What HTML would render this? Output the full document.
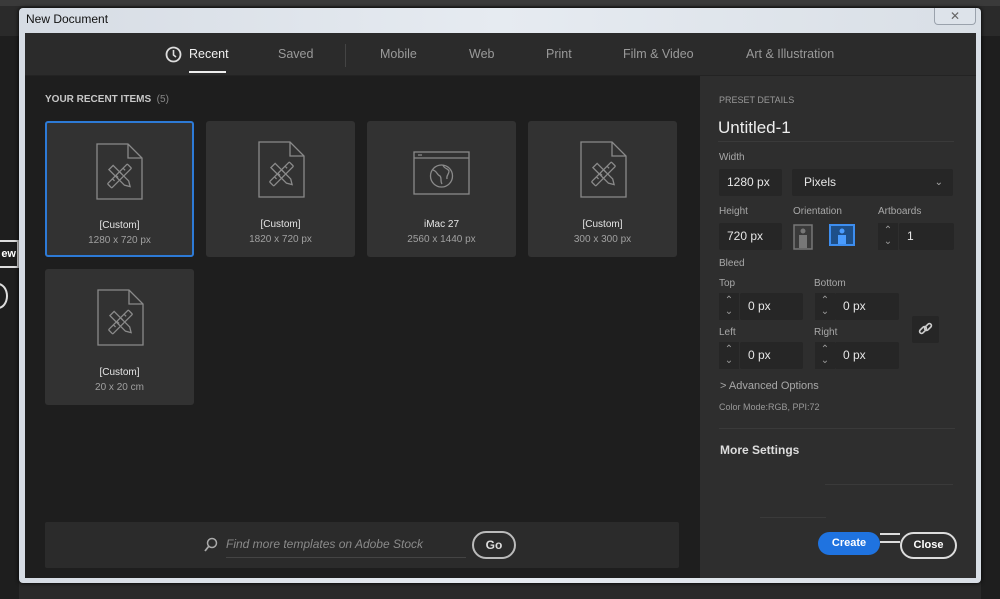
<!DOCTYPE html>
<html><head><meta charset="utf-8"><style>
*{box-sizing:border-box;margin:0;padding:0}
body{width:1000px;height:599px;overflow:hidden;background:#2a2a2a;font-family:"Liberation Sans",sans-serif;position:relative}
.a{position:absolute}
.t{color:#9a9a9a;font-size:12.5px}
.card{position:absolute;width:149px;height:136px;background:#323232;border-radius:3px}
.card.sel{border:2px solid #2d7ad6}
.card svg{position:absolute;left:50%;margin-left:-24px;top:20px}
.card .n{position:absolute;top:98px;width:100%;text-align:center;color:#e6e6e6;font-size:10px}
.card .d{position:absolute;top:113px;width:100%;text-align:center;color:#a0a0a0;font-size:10px}
.lbl{position:absolute;color:#a8a8a8;font-size:10px}
.inp{position:absolute;background:#262626;border-radius:2px;color:#e6e6e6;font-size:12px;padding-left:8px;line-height:27px;height:27px}
.spin{position:absolute;width:20px;height:27px;background:#262626;color:#9a9a9a;font-size:10px;text-align:center;line-height:11px;padding-top:2px}
</style></head><body>
<div class="a" style="left:0;top:0;width:1000px;height:6px;background:#3a3a3a"></div>
<div class="a" style="left:0;top:36px;width:19px;height:563px;background:#1e1e1e"></div>
<div class="a" style="left:981px;top:36px;width:19px;height:563px;background:#1e1e1e"></div>
<div class="a" style="left:0;top:240px;width:19px;height:28px;border:2px solid #ddd;border-left:none;color:#fff;font-size:11px;font-weight:bold;line-height:24px;text-align:right;padding-right:1px">ew</div>
<div class="a" style="left:-12px;top:283px;width:20px;height:26px;border:2px solid #ddd;border-radius:50%"></div>
<div class="a" style="left:19px;top:8px;width:962px;height:575px;background:linear-gradient(90deg,#d6dce4,#e6ebf1 50%,#d9dfe6);border-radius:4px;box-shadow:0 0 4px #000"></div>
<div class="a" style="left:26px;top:12px;font-size:12px;color:#111">New Document</div>
<div class="a" style="left:934px;top:8px;width:42px;height:17px;border:1px solid #9aa2ac;border-top:none;border-radius:0 0 4px 4px;background:#dde3ea;color:#666;font-size:12px;text-align:center;line-height:16px">✕</div>
<div class="a" style="left:25px;top:33px;width:951px;height:545px;background:#1e1e1e"></div>
<div class="a" style="left:25px;top:33px;width:951px;height:43px;background:#2b2b2b;border-bottom:1px solid #232323"></div>
<svg class="a" style="left:165px;top:46px" width="17" height="17" viewBox="0 0 17 17"><circle cx="8.5" cy="8.5" r="7" fill="none" stroke="#ddd" stroke-width="1.8"/><path d="M8.5 4V9L11 11" fill="none" stroke="#ddd" stroke-width="1.6"/></svg>
<div class="a" style="left:189px;top:47px;color:#f0f0f0;font-size:12.5px">Recent</div>
<div class="a" style="left:189px;top:71px;width:37px;height:2px;background:#eee"></div>
<div class="a t" style="left:278px;top:47px">Saved</div>
<div class="a" style="left:345px;top:44px;width:1px;height:23px;background:#444"></div>
<div class="a t" style="left:380px;top:47px">Mobile</div>
<div class="a t" style="left:469px;top:47px">Web</div>
<div class="a t" style="left:546px;top:47px">Print</div>
<div class="a t" style="left:623px;top:47px">Film &amp; Video</div>
<div class="a t" style="left:746px;top:47px">Art &amp; Illustration</div>
<div class="a" style="left:45px;top:94px;color:#c8c8c8;font-size:10px;font-weight:bold">YOUR RECENT ITEMS <span style="color:#888;font-weight:normal">&nbsp;(5)</span></div>

<svg width="0" height="0" style="position:absolute"><defs>
<g id="doc" fill="none" stroke="#8a8a8a" stroke-width="1.3"><path d="M2 1H33L47 15V56H2Z"/><path d="M33 1V15H47"/>
<g transform="translate(24.5 33) rotate(45)"><rect x="-3" y="-14" width="6" height="28" rx="1"/><path d="M-3 -8H0M-3 -3H0M-3 2H0M-3 7H0"/></g>
<g transform="translate(24.5 33) rotate(-45)"><path d="M-3 -12H3V10L0 15L-3 10Z"/></g></g>
</defs></svg>

<div class="card sel" style="left:45px;top:121px"><svg width="49" height="58" style="top:20px;margin-left:-25px"><use href="#doc"/></svg><div class="n" style="top:97px">[Custom]</div><div class="d" style="top:112px">1280 x 720 px</div></div>
<div class="card" style="left:206px;top:121px"><svg width="49" height="58"><use href="#doc"/></svg><div class="n">[Custom]</div><div class="d">1820 x 720 px</div></div>
<div class="card" style="left:367px;top:121px"><svg width="58" height="46" style="margin-left:-29px;top:30px" viewBox="0 0 58 46"><g fill="none" stroke="#8a8a8a" stroke-width="1.3"><rect x="1" y="1" width="55" height="42"/><path d="M1 7H56M5 4H9"/><circle cx="28.5" cy="25" r="11"/><path d="M20 19C24 20 24 24 27 25C29 27 27 30 29 33M30 14C31 18 35 17 36 20C36 24 33 24 34 28"/></g></svg><div class="n">iMac 27</div><div class="d">2560 x 1440 px</div></div>
<div class="card" style="left:528px;top:121px"><svg width="49" height="58"><use href="#doc"/></svg><div class="n">[Custom]</div><div class="d">300 x 300 px</div></div>
<div class="card" style="left:45px;top:269px"><svg width="49" height="58"><use href="#doc"/></svg><div class="n">[Custom]</div><div class="d">20 x 20 cm</div></div>

<div class="a" style="left:45px;top:522px;width:634px;height:46px;background:#2b2b2b;border-radius:2px"></div>
<svg class="a" style="left:203px;top:537px" width="15" height="16"><circle cx="9" cy="6" r="4.5" fill="none" stroke="#aaa" stroke-width="1.5"/><path d="M6 9L2 14" stroke="#aaa" stroke-width="1.8"/></svg>
<div class="a" style="left:226px;top:537px;color:#8a8a8a;font-size:12px;font-style:italic">Find more templates on Adobe Stock</div>
<div class="a" style="left:226px;top:557px;width:240px;height:1px;background:#444"></div>
<div class="a" style="left:472px;top:531px;width:44px;height:28px;border:2px solid #bbb;border-radius:14px;color:#ddd;font-size:12px;font-weight:bold;text-align:center;line-height:24px">Go</div>

<div class="a" style="left:700px;top:76px;width:276px;height:502px;background:#2e2e2e"></div>
<div class="lbl" style="left:719px;top:95px;color:#999;font-size:9px">PRESET DETAILS</div>
<div class="a" style="left:718px;top:118px;color:#eee;font-size:17px">Untitled-1</div>
<div class="a" style="left:718px;top:141px;width:236px;height:1px;background:#3a3a3a"></div>
<div class="lbl" style="left:719px;top:152px">Width</div>
<div class="inp" style="left:719px;top:169px;width:63px">1280 px</div>
<div class="inp" style="left:792px;top:169px;width:161px;padding-left:12px">Pixels<span style="position:absolute;right:10px;top:0;color:#aaa;font-size:10px">&#8964;</span></div>
<div class="lbl" style="left:719px;top:206px">Height</div>
<div class="lbl" style="left:793px;top:206px">Orientation</div>
<div class="lbl" style="left:878px;top:206px">Artboards</div>
<div class="inp" style="left:719px;top:223px;width:63px">720 px</div>
<svg class="a" style="left:793px;top:224px" width="20" height="26"><rect x="1" y="1" width="18" height="24" fill="#3a3a3a" stroke="#777" stroke-width="1.5"/><circle cx="10" cy="7" r="2.5" fill="#777"/><path d="M6 11H14V24H6Z" fill="#777"/></svg>
<svg class="a" style="left:829px;top:224px" width="26" height="22"><rect x="1" y="1" width="24" height="20" fill="#1e4f88" stroke="#3d8ef0" stroke-width="2"/><circle cx="13" cy="7" r="2.5" fill="#4a9cff"/><path d="M9 11H17V20H9Z" fill="#4a9cff"/></svg>
<div class="spin" style="left:878px;top:223px">&#8963;<br>&#8964;</div>
<div class="inp" style="left:899px;top:223px;width:55px">1</div>
<div class="lbl" style="left:719px;top:258px">Bleed</div>
<div class="lbl" style="left:719px;top:278px">Top</div>
<div class="lbl" style="left:814px;top:278px">Bottom</div>
<div class="spin" style="left:719px;top:293px">&#8963;<br>&#8964;</div><div class="inp" style="left:740px;top:293px;width:63px">0 px</div>
<div class="spin" style="left:815px;top:293px">&#8963;<br>&#8964;</div><div class="inp" style="left:835px;top:293px;width:64px">0 px</div>
<div class="lbl" style="left:719px;top:327px">Left</div>
<div class="lbl" style="left:814px;top:327px">Right</div>
<div class="spin" style="left:719px;top:342px">&#8963;<br>&#8964;</div><div class="inp" style="left:740px;top:342px;width:63px">0 px</div>
<div class="spin" style="left:815px;top:342px">&#8963;<br>&#8964;</div><div class="inp" style="left:835px;top:342px;width:64px">0 px</div>
<div class="a" style="left:912px;top:316px;width:27px;height:27px;background:#262626;border-radius:2px"></div>
<svg class="a" style="left:917px;top:321px" width="17" height="17"><g fill="none" stroke="#ccc" stroke-width="1.6"><rect x="2" y="7" width="8" height="4" rx="2" transform="rotate(-45 6 9)"/><rect x="7" y="4" width="8" height="4" rx="2" transform="rotate(-45 11 6)"/></g></svg>
<div class="a" style="left:720px;top:380px;color:#a8a8a8;font-size:11px">&gt; Advanced Options</div>
<div class="a" style="left:719px;top:402px;color:#999;font-size:9px">Color Mode:RGB, PPI:72</div>
<div class="a" style="left:719px;top:428px;width:236px;height:1px;background:#3a3a3a"></div>
<div class="a" style="left:720px;top:443px;color:#ddd;font-size:12px;font-weight:bold">More Settings</div>
<div class="a" style="left:825px;top:484px;width:128px;height:1px;background:#3a3a3a"></div>
<div class="a" style="left:760px;top:517px;width:66px;height:1px;background:#3a3a3a"></div>
<div class="a" style="left:818px;top:532px;width:62px;height:23px;background:#1f73e0;border-radius:12px;color:#fff;font-size:11px;font-weight:bold;text-align:center;line-height:23px">Create</div>
<div class="a" style="left:900px;top:532px;width:57px;height:27px;border:2px solid #ddd;border-radius:14px;color:#fff;font-size:11px;font-weight:bold;text-align:center;line-height:22px">Close</div>
<div class="a" style="left:880px;top:533px;width:20px;height:10px;border-top:2px solid #ddd;border-bottom:2px solid #ddd"></div>
</body></html>
